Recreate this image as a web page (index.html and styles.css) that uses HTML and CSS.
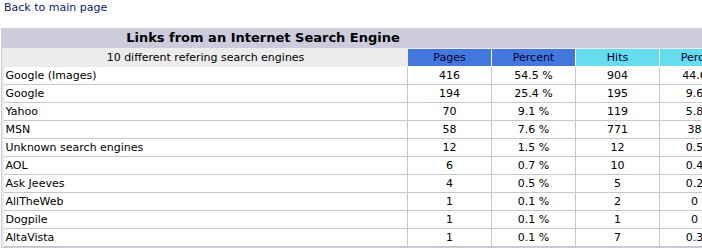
FILE: index.html
```html
<!DOCTYPE html>
<html>
<head>
<meta charset="utf-8">
<link rel="stylesheet" href="styles.css">
</head>
<body>
<div class="back"><a href="#">Back to main page</a></div>
<div class="frame">
  <div class="title-bar"><span class="title">Links from an Internet Search Engine</span></div>
  <div class="inner">
    <table class="data">
      <colgroup><col class="c-label"><col class="c-num"><col class="c-num"><col class="c-num"><col class="c-num"></colgroup>
      <tr class="head">
        <th class="label">10 different refering search engines</th>
        <th class="pages">Pages</th>
        <th class="pages">Percent</th>
        <th class="hits">Hits</th>
        <th class="hits">Percent</th>
      </tr>
      <tr><td class="name">Google (Images)</td><td>416</td><td>54.5 %</td><td>904</td><td>44.6 %</td></tr>
      <tr><td class="name">Google</td><td>194</td><td>25.4 %</td><td>195</td><td>9.6 %</td></tr>
      <tr><td class="name">Yahoo</td><td>70</td><td>9.1 %</td><td>119</td><td>5.8 %</td></tr>
      <tr><td class="name">MSN</td><td>58</td><td>7.6 %</td><td>771</td><td>38 %</td></tr>
      <tr><td class="name">Unknown search engines</td><td>12</td><td>1.5 %</td><td>12</td><td>0.5 %</td></tr>
      <tr><td class="name">AOL</td><td>6</td><td>0.7 %</td><td>10</td><td>0.4 %</td></tr>
      <tr><td class="name">Ask Jeeves</td><td>4</td><td>0.5 %</td><td>5</td><td>0.2 %</td></tr>
      <tr><td class="name">AllTheWeb</td><td>1</td><td>0.1 %</td><td>2</td><td>0 %</td></tr>
      <tr><td class="name">Dogpile</td><td>1</td><td>0.1 %</td><td>1</td><td>0 %</td></tr>
      <tr><td class="name">AltaVista</td><td>1</td><td>0.1 %</td><td>7</td><td>0.3 %</td></tr>
    </table>
  </div>
</div>
</body>
</html>
```

FILE: styles.css
```css
html, body {
  margin: 0;
  padding: 0;
  background: #ffffff;
  overflow: hidden;
}
body {
  font-family: "DejaVu Sans", Verdana, sans-serif;
  font-size: 11px;
  color: #000000;
}
.back {
  padding: 1px 0 0 4px;
  height: 27px;
  line-height: 13px;
}
.back a {
  color: #0a1a70;
  text-decoration: none;
}
.frame {
  margin-left: 1px;
  width: 760px;
  background: #ccccdd;
  padding: 0 1px 2px 1px;
}
.title-bar {
  height: 20px;
  line-height: 20px;
  width: 522px;
  text-align: center;
  font-size: 13px;
  font-weight: bold;
}
.inner {
  background: #ececec;
  padding: 1px 0 0 1px;
}
.data {
  border-collapse: collapse;
  table-layout: fixed;
  width: 740px;
}
.c-label { width: 404px; }
.c-num { width: 84px; }
.data th {
  font-weight: normal;
  height: 17px;
  padding: 0;
  line-height: 16px;
  border: 1px solid #ffffff;
  border-top: 0;
  text-align: center;
}
.data th.label {
  background: #ececec;
  border-color: #ececec;
}
.data th.pages {
  background: #4477dd;
  color: #000033;
}
.data th.hits {
  background: #66ddee;
  color: #000033;
}
.data td {
  background: #ffffff;
  height: 17px;
  padding: 0;
  line-height: 17px;
  text-align: center;
  border: 1px solid #c8c8c8;
  white-space: nowrap;
  overflow: hidden;
}
.data td.name {
  text-align: left;
  padding-left: 2px;
  border-left: 0;
}
```
